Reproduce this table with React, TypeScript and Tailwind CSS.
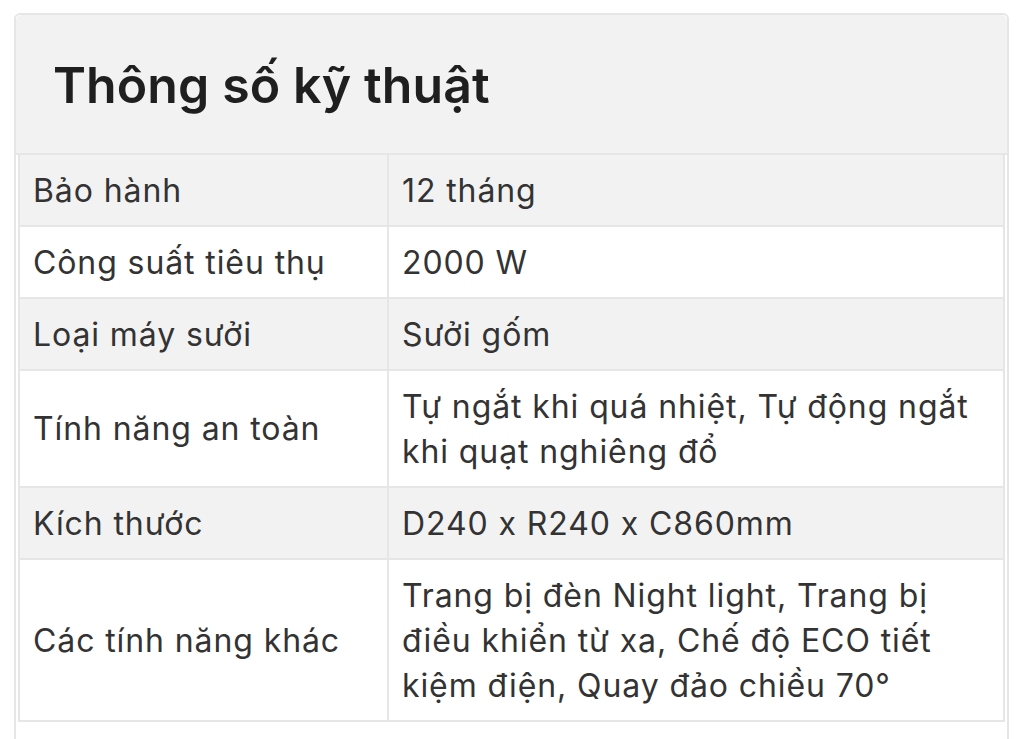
type Spec = {
  label: string;
  value: string;
};

const specs: Spec[] = [
  { label: "Bảo hành", value: "12 tháng" },
  { label: "Công suất tiêu thụ", value: "2000 W" },
  { label: "Loại máy sưởi", value: "Sưởi gốm" },
  { label: "Tính năng an toàn", value: "Tự ngắt khi quá nhiệt, Tự động ngắt khi quạt nghiêng đổ" },
  { label: "Kích thước", value: "D240 x R240 x C860mm" },
  {
    label: "Các tính năng khác",
    value: "Trang bị đèn Night light, Trang bị điều khiển từ xa, Chế độ ECO tiết kiệm điện, Quay đảo chiều 70°",
  },
];

export default function App() {
  return (
    <div
      className="h-[739px] overflow-hidden bg-white pt-[13px] pl-[14px] pr-[15px]"
      style={{ fontFamily: "Inter, 'Noto Sans', sans-serif" }}
    >
      <div className="min-h-[760px] rounded-md border-2 border-[#e6e6e6] bg-white">
        <div className="flex h-[140px] items-center rounded-t-md border-b-2 border-[#e6e6e6] bg-[#f2f2f2] pl-[37px] pt-[2px]">
          <h2 className="text-[50px] font-semibold tracking-[0.1px] text-[#1f1f1f]">Thông số kỹ thuật</h2>
        </div>
        <div className="px-[2px]">
          <table className="w-full border-collapse text-[32px] leading-[45px] tracking-[0.9px] text-[#333333]">
            <tbody>
              {specs.map((s, i) => (
                <tr key={s.label} className={i % 2 === 0 ? "bg-[#f2f2f2]" : "bg-white"}>
                  <td className="w-[369px] border-2 border-t-0 border-[#e6e6e6] py-[12.5px] pl-[13px] pr-3 align-middle">
                    {s.label}
                  </td>
                  <td className="border-2 border-t-0 border-[#e6e6e6] py-[12.5px] pl-[13px] pr-6 align-middle">
                    {s.value}
                  </td>
                </tr>
              ))}
            </tbody>
          </table>
        </div>
      </div>
    </div>
  );
}
